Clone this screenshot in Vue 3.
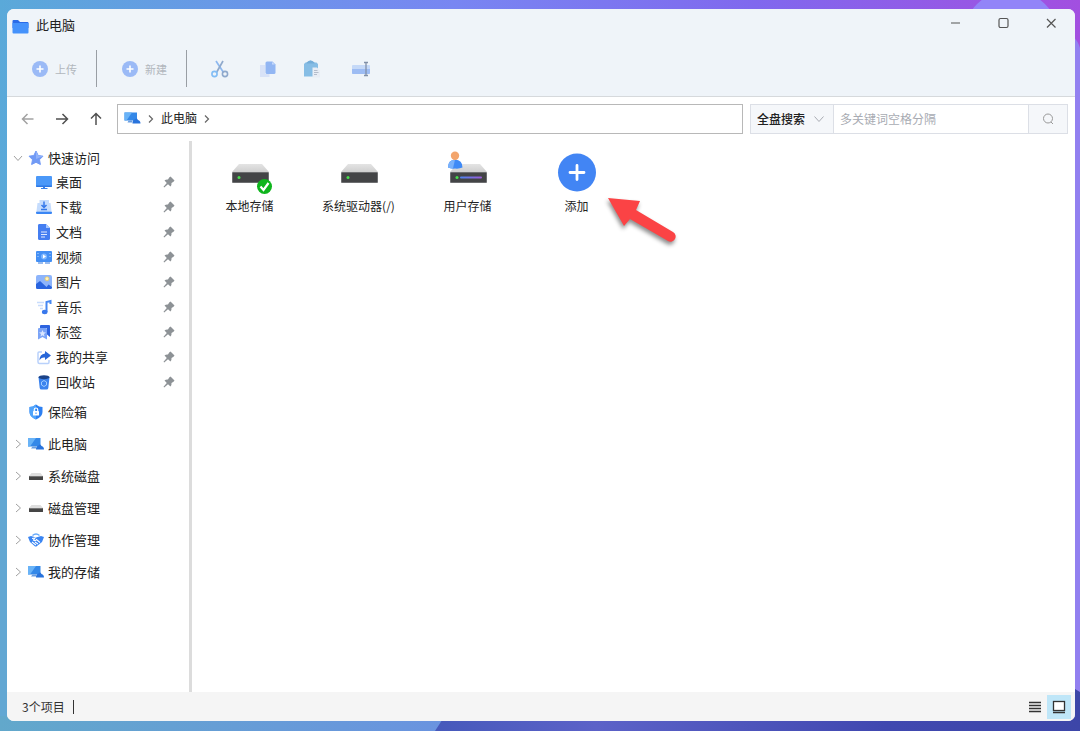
<script setup>
import { ref } from 'vue'

const scope = ref('all')
const keyword = ref('')

const quickLinks = [
  { label: '桌面', icon: 'desktop' },
  { label: '下载', icon: 'download' },
  { label: '文档', icon: 'document' },
  { label: '视频', icon: 'video' },
  { label: '图片', icon: 'picture' },
  { label: '音乐', icon: 'music' },
  { label: '标签', icon: 'tag' },
  { label: '我的共享', icon: 'share' },
  { label: '回收站', icon: 'trash' },
]

const roots = [
  { label: '保险箱', icon: 'safe', expandable: false },
  { label: '此电脑', icon: 'pc', expandable: true },
  { label: '系统磁盘', icon: 'disk', expandable: true },
  { label: '磁盘管理', icon: 'disk', expandable: true },
  { label: '协作管理', icon: 'team', expandable: true },
  { label: '我的存储', icon: 'pc', expandable: true },
]

const tiles = [
  { label: '本地存储', badge: 'check' },
  { label: '系统驱动器(/)', badge: '' },
  { label: '用户存储', badge: 'user' },
]

const tools = [
  { label: '剪切', icon: 'cut' },
  { label: '复制', icon: 'copy' },
  { label: '粘贴', icon: 'paste' },
  { label: '重命名', icon: 'rename' },
]
</script>

<template>
  <div class="desktop">
    <svg class="wallpaper" viewBox="0 0 1080 731" preserveAspectRatio="none" aria-hidden="true">
      <defs>
        <linearGradient id="wp" x1="0" y1="0" x2="1" y2="0">
          <stop offset="0" stop-color="#5aa9d9" />
          <stop offset="0.22" stop-color="#6a97e8" />
          <stop offset="0.42" stop-color="#7886f2" />
          <stop offset="0.7" stop-color="#8068ee" />
          <stop offset="1" stop-color="#a24fe0" />
        </linearGradient>
        <linearGradient id="wpBottom" x1="0" y1="0" x2="1" y2="0">
          <stop offset="0" stop-color="#62a8cb" />
          <stop offset="1" stop-color="#6a93e0" />
        </linearGradient>
        <linearGradient id="wpDark" x1="0" y1="0" x2="1" y2="0">
          <stop offset="0" stop-color="#4659bb" />
          <stop offset="0.25" stop-color="#5c62c8" />
          <stop offset="0.7" stop-color="#4048b0" />
          <stop offset="1" stop-color="#3d46a8" />
        </linearGradient>
      </defs>
      <rect width="1080" height="731" fill="url(#wp)" />
      <path d="M0 300H20V731H0z" fill="#62a7d3" />
      <circle cx="1011" cy="38" r="48" fill="#9284f8" />
      <path d="M1060 30Q1076 34 1080 48V731H1060z" fill="#9280f0" />
      <rect y="716" width="450" height="15" fill="url(#wpBottom)" />
      <path d="M455 700H1060V680L1080 692V731H435z" fill="url(#wpDark)" />
    </svg>

    <section class="window">
      <header class="head">
        <div class="titlebar">
          <svg class="folder" width="17" height="14" viewBox="0 0 17 14" aria-hidden="true">
            <path d="M.5 1Q.5 0 1.500 0H6L8 2H15.500Q16.500 2 16.500 3V8H.5z" fill="#2a6be8" />
            <path d="M.5 3H16.500V12.500Q16.500 13.500 15.500 13.500H1.500Q.5 13.500 .5 12.500z" fill="#4592fb" />
          </svg>
          <h1 class="title">此电脑</h1>
          <div class="controls">
            <button type="button" aria-label="最小化">
              <svg width="12" height="12" viewBox="0 0 12 12"><path d="M2 6H11" /></svg>
            </button>
            <button type="button" aria-label="最大化">
              <svg width="12" height="12" viewBox="0 0 12 12"><rect x="2" y="1.500" width="9" height="9" rx="1.500" /></svg>
            </button>
            <button type="button" aria-label="关闭">
              <svg width="12" height="12" viewBox="0 0 12 12"><path d="M2 2L10.500 10.500M10.500 2L2 10.500" /></svg>
            </button>
          </div>
        </div>

        <div class="toolbar">
          <button v-for="name in ['上传', '新建']" :key="name" type="button" class="action">
            <svg width="16" height="16" viewBox="0 0 16 16" aria-hidden="true">
              <circle cx="8" cy="8" r="8" fill="#9bbaf6" />
              <path d="M4.500 8H11.500M8 4.500V11.500" stroke="#fff" stroke-width="1.600" />
            </svg>
            <span>{{ name }}</span>
          </button>
          <div class="tools">
            <button v-for="tool in tools" :key="tool.icon" type="button" :aria-label="tool.label">
              <svg width="20" height="20" viewBox="0 0 20 20" fill="none" aria-hidden="true">
                <template v-if="tool.icon === 'cut'">
                  <path d="M6 2L13.500 13.500" stroke="#8db8f0" stroke-width="1.700" />
                  <path d="M13 2L6.500 13.500" stroke="#8fa9cc" stroke-width="1.700" />
                  <circle cx="4.500" cy="15" r="2.600" stroke="#82bdf5" stroke-width="1.600" />
                  <circle cx="15" cy="15" r="2.600" stroke="#8fa9cc" stroke-width="1.600" />
                </template>
                <template v-else-if="tool.icon === 'copy'">
                  <path d="M3 6H8V15H12.500V18H3z" fill="#d8e2f7" />
                  <path d="M10 2.500H15.500L18.500 5.500V13.500Q18.500 15 17 15H10Q8.500 15 8.500 13.500V4Q8.500 2.500 10 2.500z" fill="#92b6f3" />
                  <path d="M15 3V5.500H18z" fill="#c8dafb" />
                </template>
                <template v-else-if="tool.icon === 'paste'">
                  <path d="M1.500 3.500H4Q6.500 -.5 9 3.500H12.500L14 5V17.500H0V5z" fill="#86bde5" />
                  <path d="M2.500 3.500Q6.500 -.5 10.500 3.500V4.500H2.500z" fill="#74add9" />
                  <path d="M8.500 8.500H13L16 11.500V18.500H8.500z" fill="#e8edf5" />
                  <path d="M10 11.500H13.500M10 13.500H14.500M10 15.500H13" stroke="#b5bdcb" />
                </template>
                <template v-else>
                  <rect x="1" y="6" width="18" height="9" rx="1" fill="#c5d9f8" />
                  <path d="M1 10H19V14Q19 15 18 15H2Q1 15 1 14z" fill="#9dbcf3" />
                  <path d="M15 4V16M13 3.500H17M13 16.500H17" stroke="#8190a8" stroke-width="1.300" />
                </template>
              </svg>
            </button>
          </div>
        </div>
      </header>

      <nav class="navbar" aria-label="导航">
        <div class="history">
          <button type="button" class="faded" aria-label="后退">
            <svg width="14" height="14" viewBox="0 0 14 14"><path d="M12.500 7H1.500M6.500 2L1.500 7L6.500 12" /></svg>
          </button>
          <button type="button" aria-label="前进">
            <svg width="14" height="14" viewBox="0 0 14 14"><path d="M1 7H12.500M7.500 2L12.500 7L7.500 12" /></svg>
          </button>
          <button type="button" aria-label="上一级">
            <svg width="14" height="14" viewBox="0 0 14 14"><path d="M7 13V1.500M2 6.500L7 1.500L12 6.500" /></svg>
          </button>
        </div>
        <div class="address">
          <svg width="17" height="14" viewBox="0 0 17 14" aria-hidden="true">
            <path d="M.5 1.500H13V9.500H.5z" fill="#3488e8" />
            <path d="M.5 1.500H8L2.500 9.500H.5z" fill="#69b3f7" />
            <path d="M4.500 9.500H8V11.500H3.500z" fill="#6a9ee0" />
            <path d="M8.500 11.500Q8.500 8.500 11 8.500Q12.500 6.500 14 9Q16.500 9.500 16.500 12.500H8.500z" fill="#2873dc" />
          </svg>
          <svg class="crumb" width="6" height="8" viewBox="0 0 6 8" aria-hidden="true"><path d="M1 .5L4.500 4L1 7.500" /></svg>
          <a href="#">此电脑</a>
          <svg class="crumb" width="6" height="8" viewBox="0 0 6 8" aria-hidden="true"><path d="M1 .5L4.500 4L1 7.500" /></svg>
        </div>
        <form class="search" @submit.prevent>
          <div class="scope">
            <select v-model="scope" aria-label="搜索范围">
              <option value="all">全盘搜索</option>
            </select>
            <svg width="12" height="8" viewBox="0 0 12 8" aria-hidden="true"><path d="M1.500 1.500L6 6.500L10.500 1.500" /></svg>
          </div>
          <input v-model="keyword" type="text" placeholder="多关键词空格分隔" aria-label="搜索关键词" />
          <button type="submit" aria-label="搜索">
            <svg width="14" height="14" viewBox="0 0 14 14"><circle cx="7" cy="6.500" r="4.500" /><path d="M10 10L12 12" /></svg>
          </button>
        </form>
      </nav>

      <div class="body">
        <aside class="sidebar">
          <div class="row quick">
            <svg class="twist" width="10" height="10" viewBox="0 0 10 10"><path d="M1 3L5 7.500L9 3" /></svg>
            <svg class="icon" width="16" height="16" viewBox="0 0 16 16" aria-hidden="true">
              <path d="M8 1L10.200 5.500L15 6.200L11.500 9.700L12.400 14.500L8 12.300L3.600 14.500L4.500 9.700L1 6.200L5.800 5.500z" fill="#719af5" stroke="#719af5" stroke-linejoin="round" />
              <path d="M8 1L10.200 5.500L15 6.200L8 9z" fill="#91b2fa" />
            </svg>
            <a href="#">快速访问</a>
          </div>
          <ul class="links">
            <li v-for="link in quickLinks" :key="link.icon" class="row">
              <svg class="icon" width="16" height="16" viewBox="0 0 16 16" fill="none" aria-hidden="true">
                <template v-if="link.icon === 'desktop'">
                  <rect x="0" y="2" width="16" height="11" rx="1" fill="#4b98f8" />
                  <path d="M0 11.500H16V12Q16 13 15 13H1Q0 13 0 12z" fill="#2e78e4" />
                  <path d="M7 13H9V14H11.500V15H5V14H7z" fill="#3a80e8" />
                </template>
                <template v-else-if="link.icon === 'download'">
                  <path d="M3.500 1H13V4H14.500L15.500 12H.5L1.500 4H3.500z" fill="#c5dcfd" />
                  <path d="M8 2.500V8M5.500 6L8 8.500L10.500 6M5 10.500H11" stroke="#3578ea" stroke-width="1.500" />
                  <rect y="12.500" width="16" height="2.500" rx="1" fill="#3a86f4" />
                </template>
                <template v-else-if="link.icon === 'document'">
                  <path d="M3 0H10L14 4V14.500Q14 16 12.500 16H3.500Q2 16 2 14.500V1.500Q2 0 3 0z" fill="#447ef1" />
                  <path d="M10 0V4H14z" fill="#a7c7ff" />
                  <path d="M5 8H11M5 10.500H11M5 13H9" stroke="#dfeaff" stroke-width="1.200" />
                </template>
                <template v-else-if="link.icon === 'video'">
                  <rect y="2" width="16" height="11" rx="1" fill="#438ff4" />
                  <path d="M2 4V5M2 7V8M14 4V5M14 7V8" stroke="#bddaff" />
                  <circle cx="8" cy="7.500" r="3" fill="#7fb8ff" />
                  <path d="M7 5.500L10 7.500L7 9.500z" fill="#fff" />
                  <path d="M2 14H7M9 14H14" stroke="#3478dd" />
                </template>
                <template v-else-if="link.icon === 'picture'">
                  <rect y="1" width="16" height="14" rx="2" fill="#8db4fb" />
                  <circle cx="11" cy="4.800" r="2" fill="#fff0ba" stroke="#e9c65e" stroke-width=".8" />
                  <path d="M0 10L4 7L10.500 13L12.500 10.500L16 13V13.500Q16 15 14.500 15H1.500Q0 15 0 13.500z" fill="#2964df" />
                </template>
                <template v-else-if="link.icon === 'music'">
                  <path d="M1 3.500H8M2 6.500H7M4 9.500H7" stroke="#c8dcfc" stroke-width="1.500" />
                  <path d="M10.500 13V3L14.500 2V5" stroke="#4688f2" stroke-width="2" />
                  <ellipse cx="8.700" cy="13" rx="2.800" ry="2.200" fill="#3978ec" />
                </template>
                <template v-else-if="link.icon === 'tag'">
                  <path d="M5 1H13Q14 1 14 2V13L11 10.500V4H4V2Q4 1 5 1z" fill="#2d63df" />
                  <path d="M3 4H10Q11 4 11 5V15.500L6.500 13L2 15.500V5Q2 4 3 4z" fill="#7ba4f7" />
                  <path d="M6.500 6L7.500 8.300L10 8.500L8 10L8.500 12.500L6.500 11.200L4.500 12.500L5 10L3 8.500L5.500 8.300z" fill="#dbe7ff" />
                </template>
                <template v-else-if="link.icon === 'share'">
                  <path d="M6 3H3Q2 3 2 4V13Q2 14.500 3.500 14.500H12Q13 14.500 13 13V11" stroke="#b9d1fb" stroke-width="1.500" />
                  <path d="M9 2L15 6.500L9 11V8.500Q5 8 3.500 11.500Q3.500 5 9 4.500z" fill="#2866d8" />
                </template>
                <template v-else>
                  <path d="M2.500 3H13.500L12.300 14Q12.200 15.500 10.500 15.500H5.500Q3.800 15.500 3.700 14z" fill="#3b83ee" />
                  <ellipse cx="8" cy="3.200" rx="5.500" ry="2" fill="#1b4388" />
                  <path d="M8 6.500L10.500 8V11L8 12.500L5.500 11V8z" stroke="#9fccff" stroke-width="1" />
                </template>
              </svg>
              <a href="#">{{ link.label }}</a>
              <button type="button" class="pin" :aria-label="'取消固定 ' + link.label">
                <svg width="12" height="12" viewBox="0 0 12 12">
                  <path d="M7.500 .5L11.500 4.500L10.500 5.800L8.500 7Q8.800 9 7.500 10.500L5 8.200L1.200 11.500L.5 10.800L3.800 7L1.500 4.500Q3 3.200 5 3.500L6.200 1.500z" />
                </svg>
              </button>
            </li>
          </ul>
          <ul class="roots">
            <li v-for="root in roots" :key="root.label" class="row">
              <svg class="twist" width="10" height="10" viewBox="0 0 10 10"><path v-if="root.expandable" d="M3 1L7.500 5L3 9" /></svg>
              <svg class="icon" width="16" height="16" viewBox="0 0 16 16" fill="none" aria-hidden="true">
                <template v-if="root.icon === 'safe'">
                  <path d="M8 .5Q11 3 14.500 3V8Q14.500 13 8 15.500Q1.500 13 1.500 8V3Q5 3 8 .5z" fill="#2d80f2" />
                  <path d="M8 .5Q5 3 1.500 3V8Q1.500 13 8 15.500z" fill="#50a4fb" />
                  <rect x="5" y="7" width="6" height="4.500" rx=".5" fill="#fff" />
                  <path d="M6.300 7V5.500Q6.300 4 8 4Q9.700 4 9.700 5.500V7" stroke="#fff" stroke-width="1.200" />
                  <path d="M8 8.500V10" stroke="#3a8af5" />
                </template>
                <template v-else-if="root.icon === 'pc'">
                  <path d="M0 2H12.500V10.500H0z" fill="#3488e8" />
                  <path d="M0 2H8L2 10.500H0z" fill="#69b3f7" />
                  <path d="M4.500 10.500H8V12.500H3z" fill="#6a9ee0" />
                  <path d="M8 13Q8 10 10.500 9.500Q12 7.500 13.500 10Q16 10.500 16 13.500H8z" fill="#2873dc" />
                </template>
                <template v-else-if="root.icon === 'disk'">
                  <path d="M3.500 5H12.500L15 8H1z" fill="#dedede" />
                  <rect x="1" y="8" width="14" height="4" rx=".6" fill="#454545" />
                  <path d="M1.500 8.500H14.500" stroke="#777" />
                </template>
                <template v-else>
                  <path d="M4.500 3.500Q8 .5 11.500 3.500" stroke="#65a9fa" stroke-width="1.400" />
                  <path d="M0 5L3 4L8 5.500L13 4L16 5L14 10L9 14Q8 15 6.500 14L2 10z" fill="#3a85f2" />
                  <path d="M4 6.500L7 6L5.500 8Q7 9.500 8.500 7.500L12 10.500M4 10L8 13M7 10L10 12" stroke="#fff" stroke-width="1.100" />
                </template>
              </svg>
              <a href="#">{{ root.label }}</a>
            </li>
          </ul>
        </aside>

        <main class="content">
          <ul class="tiles">
            <li v-for="tile in tiles" :key="tile.label">
              <button type="button" class="tile">
                <svg width="48" height="46" viewBox="0 0 48 46" aria-hidden="true">
                  <defs>
                    <linearGradient id="lid" x1="0" y1="0" x2="0" y2="1">
                      <stop offset="0" stop-color="#e4e4e4" /><stop offset="1" stop-color="#cfcfcf" />
                    </linearGradient>
                    <linearGradient id="led" x1="16" y1="0" x2="38" y2="0" gradientUnits="userSpaceOnUse">
                      <stop offset="0" stop-color="#4d83ee" /><stop offset="1" stop-color="#9c5bd8" />
                    </linearGradient>
                  </defs>
                  <path d="M13 15H36L43 23H6z" fill="url(#lid)" />
                  <rect x="6" y="23" width="37" height="11" rx="1" fill="#6d6e70" />
                  <rect x="7" y="24" width="35" height="9" fill="#434446" />
                  <circle cx="13" cy="28.500" r="1.500" fill="#45e04a" />
                  <template v-if="tile.badge === 'check'">
                    <circle cx="38.500" cy="37.500" r="7.500" fill="#0fb51d" />
                    <path d="M34.500 37.500L37.500 41L42.500 34" fill="none" stroke="#fff" stroke-width="2.200" />
                  </template>
                  <template v-else-if="tile.badge === 'user'">
                    <rect x="16" y="27.500" width="22" height="2" rx="1" fill="url(#led)" />
                    <path d="M4 18.500Q4 11 11 10.500Q18.500 11 18.500 18.500Q15 20 11 19.500Q7 20 4 18.500z" fill="#3f8af6" />
                    <path d="M4 18.500Q4 11 11 10.500L9 19.500Q6 19.500 4 18.500z" fill="#79b1fb" />
                    <circle cx="11" cy="6.800" r="4.200" fill="#f3a56c" />
                  </template>
                </svg>
                <span>{{ tile.label }}</span>
              </button>
            </li>
            <li>
              <button type="button" class="tile">
                <svg width="48" height="46" viewBox="0 0 48 46" aria-hidden="true">
                  <circle cx="24" cy="23.500" r="19" fill="#4285f4" />
                  <path d="M17 23.500H31M24 16.500V30.500" stroke="#fff" stroke-width="2.800" stroke-linecap="round" />
                </svg>
                <span>添加</span>
              </button>
              <svg class="pointer" width="76" height="56" viewBox="0 0 76 56" aria-hidden="true">
                <path d="M4 4L36 7L32 16L69 38A5 5 0 0 1 64 47L26 25L20 32z" fill="#fb4345" />
              </svg>
            </li>
          </ul>
        </main>
      </div>

      <footer class="status">
        <span class="count">3个项目</span>
        <div class="views">
          <button type="button" aria-label="列表">
            <svg width="14" height="14" viewBox="0 0 14 14"><path d="M1 2.500H13M1 5.500H13M1 8.500H13M1 11.500H13" /></svg>
          </button>
          <button type="button" class="on" aria-label="图标">
            <svg width="14" height="14" viewBox="0 0 14 14"><rect x="1.500" y="1.500" width="11" height="9" fill="#fff" /><path d="M1 12.500H13" /></svg>
          </button>
        </div>
      </footer>
    </section>
  </div>
</template>

<style>
body {
  margin: 0;
}
</style>

<style scoped>
.desktop {
  position: relative;
  display: flex;
  box-sizing: border-box;
  min-height: 100vh;
  padding: 9px 5px 10px 7px;
  font-family: "Noto Sans CJK SC", "Noto Sans", sans-serif;
  font-size: 12px;
  line-height: 20px;
  color: #222;
}
.wallpaper {
  position: absolute;
  inset: 0;
  width: 100%;
  height: 100%;
}
.window {
  position: relative;
  flex: 1;
  min-width: 0;
  display: flex;
  flex-direction: column;
  overflow: hidden;
  border-radius: 7px;
  background: #fff;
}
button {
  display: flex;
  align-items: center;
  justify-content: center;
  padding: 0;
  border: 0;
  background: none;
  color: inherit;
  font: inherit;
}
a {
  color: inherit;
  text-decoration: none;
}
ul {
  margin: 0;
  padding: 0;
  list-style: none;
}
svg {
  flex: none;
}

.head {
  background: #eff4f9;
  border-bottom: 1px solid #d6d9dc;
}
.titlebar {
  display: flex;
  align-items: center;
  height: 32px;
  padding-left: 5px;
}
.folder {
  margin-top: 3px;
}
.title {
  margin: 0 auto 0 7px;
  font-size: 13px;
  font-weight: 400;
}
.controls {
  display: flex;
  align-self: flex-start;
}
.controls button {
  width: 48px;
  height: 28px;
}
.controls svg {
  fill: none;
  stroke: #555;
  stroke-width: 1.2;
}
.toolbar {
  display: flex;
  align-items: center;
  height: 55px;
}
.action {
  gap: 7px;
  height: 37px;
  padding: 0 19px 0 25px;
  border-right: 1px solid #999ea4;
  font-size: 11px;
  color: #b2b7bd;
}
.tools {
  display: flex;
  padding-left: 9px;
}
.tools button {
  width: 47px;
  height: 37px;
}

.navbar {
  display: flex;
  align-items: center;
  gap: 7px;
  padding: 7px;
}
.history {
  display: flex;
  gap: 6px;
}
.history button {
  width: 28px;
  height: 28px;
}
.history svg {
  fill: none;
  stroke: #505050;
  stroke-width: 1.5;
}
.history .faded svg {
  stroke: #a2a2a2;
}
.address {
  flex: 1;
  display: flex;
  align-items: center;
  gap: 6px;
  box-sizing: border-box;
  height: 30px;
  padding: 0 6px 2px;
  border: 1px solid #b8b8b8;
}
.crumb {
  margin: 2px 1px 0;
  fill: none;
  stroke: #666;
  stroke-width: 1.2;
}
.search {
  display: flex;
  box-sizing: border-box;
  width: 318px;
  height: 30px;
  border: 1px solid #dcdfe6;
}
.scope {
  position: relative;
  width: 82px;
  background: #f5f7fa;
  border-right: 1px solid #dcdfe6;
}
.scope select {
  width: 100%;
  height: 100%;
  padding: 0 0 0 6px;
  border: 0;
  background: none;
  appearance: none;
  font: inherit;
  font-weight: 500;
  color: #222;
}
.scope svg {
  position: absolute;
  top: 10px;
  right: 8px;
  fill: none;
  stroke: #a8abb2;
  pointer-events: none;
}
.search input {
  flex: 1;
  min-width: 0;
  padding: 0 6px;
  border: 0;
  font: inherit;
}
.search input::placeholder {
  color: #a8abb2;
}
.search button {
  width: 39px;
  background: #f5f7fa;
  border-left: 1px solid #dcdfe6;
}
.search button svg {
  fill: none;
  stroke: #999;
}

.body {
  flex: 1;
  display: flex;
}
.sidebar {
  box-sizing: border-box;
  width: 185px;
  padding-top: 5px;
  border-right: 3px solid #dcdcdc;
  font-size: 13px;
}
.row {
  display: flex;
  align-items: center;
  gap: 4px;
}
.quick {
  height: 23px;
  padding-left: 6px;
}
.twist {
  margin-right: 1px;
  fill: none;
  stroke: #a0a0a0;
}
.links {
  margin-bottom: 2px;
}
.links .row {
  height: 25px;
  padding: 0 14px 0 29px;
}
.roots .row {
  height: 32px;
  padding-left: 6px;
}
.pin {
  margin-left: auto;
}
.pin svg {
  fill: #8d9296;
}

.content {
  flex: 1;
  min-width: 0;
  padding: 8px 3px;
}
.tiles {
  display: flex;
  flex-wrap: wrap;
}
.tiles li {
  position: relative;
  width: 109px;
}
.tile {
  flex-direction: column;
  gap: 1px;
  width: 100%;
}
.pointer {
  position: absolute;
  top: 45px;
  left: 82px;
  filter: drop-shadow(-1px 3px 2px rgba(0, 0, 0, 0.45));
}

.status {
  display: flex;
  align-items: center;
  justify-content: space-between;
  height: 29px;
  padding: 0 4px 0 15px;
  background: #f5f5f5;
  color: #333;
}
.count {
  padding-right: 8px;
  border-right: 1px solid #333;
  line-height: 14px;
}
.views {
  display: flex;
}
.views button {
  width: 24px;
  height: 24px;
}
.views .on {
  background: #bfe6f8;
}
.views svg {
  fill: none;
  stroke: #333;
  stroke-width: 1.3;
}
</style>
